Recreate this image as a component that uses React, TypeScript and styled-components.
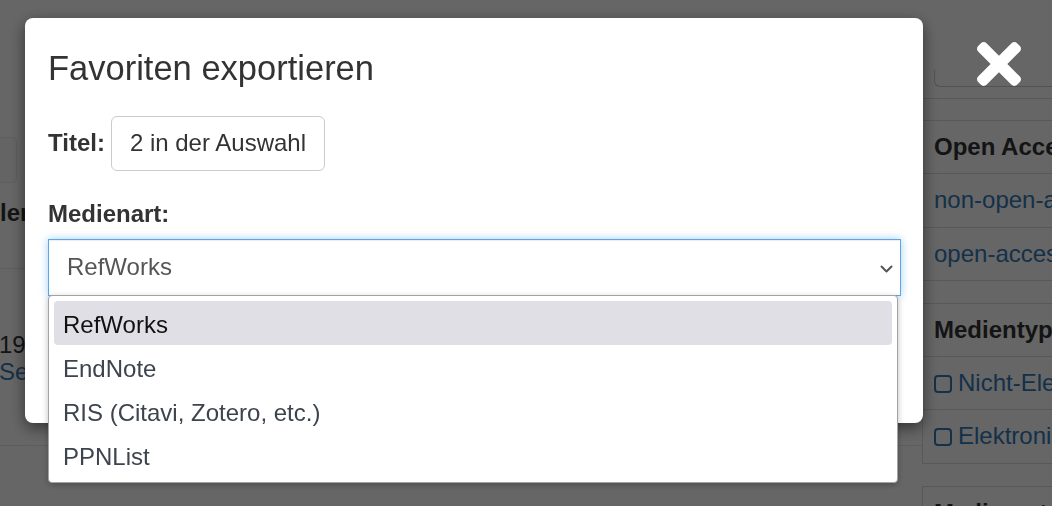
import React from "react";
import styled, { createGlobalStyle } from "styled-components";

const GlobalStyle = createGlobalStyle`
  html, body { margin: 0; padding: 0; }
  body {
    font-family: "Liberation Sans", Arial, Helvetica, sans-serif;
    background: #fff;
    color: #333;
    overflow: hidden;
  }
  * { box-sizing: border-box; }
`;

/* ---------- underlying page ---------- */

const Page = styled.div`
  display: flex;
  align-items: flex-start;
  width: 1052px;
  height: 506px;
  overflow: hidden;
  font-size: 24px;
  line-height: 34.3px;
`;

const Main = styled.main`
  flex: none;
  width: 922px;
  display: flex;
  flex-direction: column;
  white-space: nowrap;
  overflow: hidden;
  & > * { flex-shrink: 0; }
`;

const ToolBox = styled.div`
  margin: 137px 0 0 -4px;
  width: 21px;
  height: 46px;
  border: 1px solid #ececec;
  border-radius: 0 5px 5px 0;
  background: #fbfbfb;
`;

const MainHeading = styled.h3`
  margin: 13px 0 0 -60px;
  font-size: 24px;
  line-height: 34.3px;
  font-weight: 700;
  color: #333;
`;

const Rule = styled.hr<{ $gap: number }>`
  margin: ${(p) => p.$gap}px 0 0;
  border: 0;
  border-top: 1px solid #e8e8e8;
`;

const Meta = styled.div`
  margin-top: 62px;
  display: flex;
  flex-direction: column;
  align-items: flex-start;
  line-height: 27px;
  margin-left: -1px;
`;

const MetaLink = styled.a`
  color: #337ab7;
  text-decoration: none;
`;

const Sidebar = styled.aside`
  flex: 1;
  display: flex;
  flex-direction: column;
  min-width: 0;
  white-space: nowrap;
  & > * { flex-shrink: 0; }
`;

const SearchTail = styled.div`
  margin: 70px 0 0 12px;
  height: 17px;
  border: 1px solid #ccc;
  border-top: 0;
  border-right: 0;
  border-bottom-left-radius: 6px;
`;

const FacetBar = styled.div`
  margin-top: 11px;
  height: 22px;
  border-top: 1px solid #ddd;
`;

const Panel = styled.section`
  border: 1px solid #ddd;
  border-right: 0;
  margin-bottom: 22px;
`;

const PanelRow = styled.div<{ $head?: boolean }>`
  padding: 9px 11px;
  line-height: 34.3px;
  font-size: 24px;
  border-bottom: 1px solid #ddd;
  font-weight: ${(p) => (p.$head ? 700 : 400)};
  color: ${(p) => (p.$head ? "#333" : "#337ab7")};
  display: flex;
  align-items: center;
  gap: 6px;
  overflow: hidden;
  &:last-child { border-bottom: 0; }
`;

const CheckSquare = styled.span`
  display: inline-block;
  flex: none;
  width: 18px;
  height: 18px;
  margin-top: 1px;
  border: 2px solid #337ab7;
  border-radius: 4px;
`;

/* ---------- modal ---------- */

const Backdrop = styled.div`
  position: fixed;
  inset: 0;
  background: rgba(0, 0, 0, 0.6);
  z-index: 10;
`;

const ModalLayer = styled.div`
  position: fixed;
  inset: 0;
  z-index: 20;
  padding: 18px 0 0 25px;
`;

const Dialog = styled.div`
  width: 898px;
  background: #fff;
  border-radius: 8px;
  box-shadow: 0 5px 15px rgba(0, 0, 0, 0.5);
  padding: 30px 22px 127px 23px;
  color: #333;
  font-size: 24px;
  line-height: 34.3px;
`;

const Title = styled.h2`
  margin: 0;
  font-size: 34.5px;
  line-height: 40px;
  font-weight: 400;
  color: #333;
`;

const TitleRow = styled.div`
  display: flex;
  align-items: baseline;
  gap: 6px;
  margin-top: 28px;
`;

const Label = styled.label<{ $block?: boolean }>`
  display: ${(p) => (p.$block ? "block" : "inline-block")};
  margin-top: ${(p) => (p.$block ? "26px" : "0")};
  font-weight: 700;
  font-size: 24px;
  line-height: 34.3px;
`;

const ValueBox = styled.div`
  border: 1px solid #ccc;
  border-radius: 6px;
  padding: 9.35px 18px;
  font-size: 24px;
  line-height: 34.3px;
  color: #333;
`;

const SelectWrap = styled.div`
  position: relative;
  margin-top: 8px;
`;

const SelectBox = styled.div`
  display: flex;
  align-items: center;
  justify-content: space-between;
  height: 56.3px;
  padding: 0 7px 0 18px;
  border: 1px solid #5aa6e6;
  background: #fff;
  color: #555;
  box-shadow: inset 0 1px 1px rgba(0, 0, 0, 0.075), 0 0 8px rgba(102, 175, 233, 0.6);
`;

const Chevron = styled.svg`
  width: 13px;
  height: 8px;
  margin-top: 3px;
`;

const Listbox = styled.ul`
  position: absolute;
  top: calc(100% - 1px);
  left: 0;
  width: 850px;
  margin: 0;
  padding: 5px;
  list-style: none;
  background: #fff;
  border: 1px solid #a3a3a3;
  border-radius: 4px;
  box-shadow: 0 2px 6px rgba(0, 0, 0, 0.25);
  z-index: 5;
`;

const Option = styled.li<{ $active?: boolean }>`
  height: 44px;
  padding: 3px 9px 0;
  line-height: 41px;
  border-radius: 4px;
  font-size: 24px;
  background: ${(p) => (p.$active ? "#e0dfe5" : "transparent")};
  color: ${(p) => (p.$active ? "#111" : "#3d444e")};
`;

const CloseButton = styled.button`
  position: absolute;
  left: 977px;
  top: 42px;
  width: 44px;
  height: 44px;
  padding: 0;
  border: 0;
  background: transparent;
  display: flex;
`;

const options = ["RefWorks", "EndNote", "RIS (Citavi, Zotero, etc.)", "PPNList"];

export default function App() {
  return (
    <>
      <GlobalStyle />
      <Page>
        <Main>
          <ToolBox />
          <MainHeading>Händler</MainHeading>
          <Rule $gap={38} />
          <Meta>
            <span>1990</span>
            <MetaLink href="#">Seite</MetaLink>
          </Meta>
          <Rule $gap={60} />
        </Main>
        <Sidebar>
          <SearchTail />
          <FacetBar />
          <Panel>
            <PanelRow $head>Open Access</PanelRow>
            <PanelRow>non-open-access</PanelRow>
            <PanelRow>open-access</PanelRow>
          </Panel>
          <Panel>
            <PanelRow $head>Medientyp</PanelRow>
            <PanelRow>
              <CheckSquare />
              Nicht-Elektronisch
            </PanelRow>
            <PanelRow>
              <CheckSquare />
              Elektronisch
            </PanelRow>
          </Panel>
          <Panel>
            <PanelRow $head>Medienart</PanelRow>
          </Panel>
        </Sidebar>
      </Page>

      <Backdrop />
      <ModalLayer>
        <Dialog>
          <Title>Favoriten exportieren</Title>
          <TitleRow>
            <Label>Titel:</Label>
            <ValueBox>2 in der Auswahl</ValueBox>
          </TitleRow>
          <Label $block>Medienart:</Label>
          <SelectWrap>
            <SelectBox>
              <span>RefWorks</span>
              <Chevron viewBox="0 0 13 8">
                <polyline
                  points="1.5,1.5 6.5,6.5 11.5,1.5"
                  fill="none"
                  stroke="#555"
                  strokeWidth="2"
                  strokeLinecap="round"
                  strokeLinejoin="round"
                />
              </Chevron>
            </SelectBox>
            <Listbox>
              {options.map((o, i) => (
                <Option key={o} $active={i === 0}>
                  {o}
                </Option>
              ))}
            </Listbox>
          </SelectWrap>
        </Dialog>
        <CloseButton aria-label="Schließen">
          <svg width="44" height="44" viewBox="0 80 352 352">
            <path
              fill="#fff"
              d="M242.72 256l100.07-100.07c12.28-12.28 12.28-32.19 0-44.48l-22.24-22.24c-12.28-12.28-32.19-12.28-44.48 0L176 189.28 75.93 89.21c-12.28-12.28-32.19-12.28-44.48 0L9.21 111.45c-12.28 12.28-12.28 32.19 0 44.48L109.28 256 9.21 356.07c-12.28 12.28-12.28 32.19 0 44.48l22.24 22.24c12.28 12.28 32.2 12.28 44.48 0L176 322.72l100.07 100.07c12.28 12.28 32.2 12.28 44.48 0l22.24-22.24c12.28-12.28 12.28-32.19 0-44.48L242.72 256z"
            />
          </svg>
        </CloseButton>
      </ModalLayer>
    </>
  );
}
